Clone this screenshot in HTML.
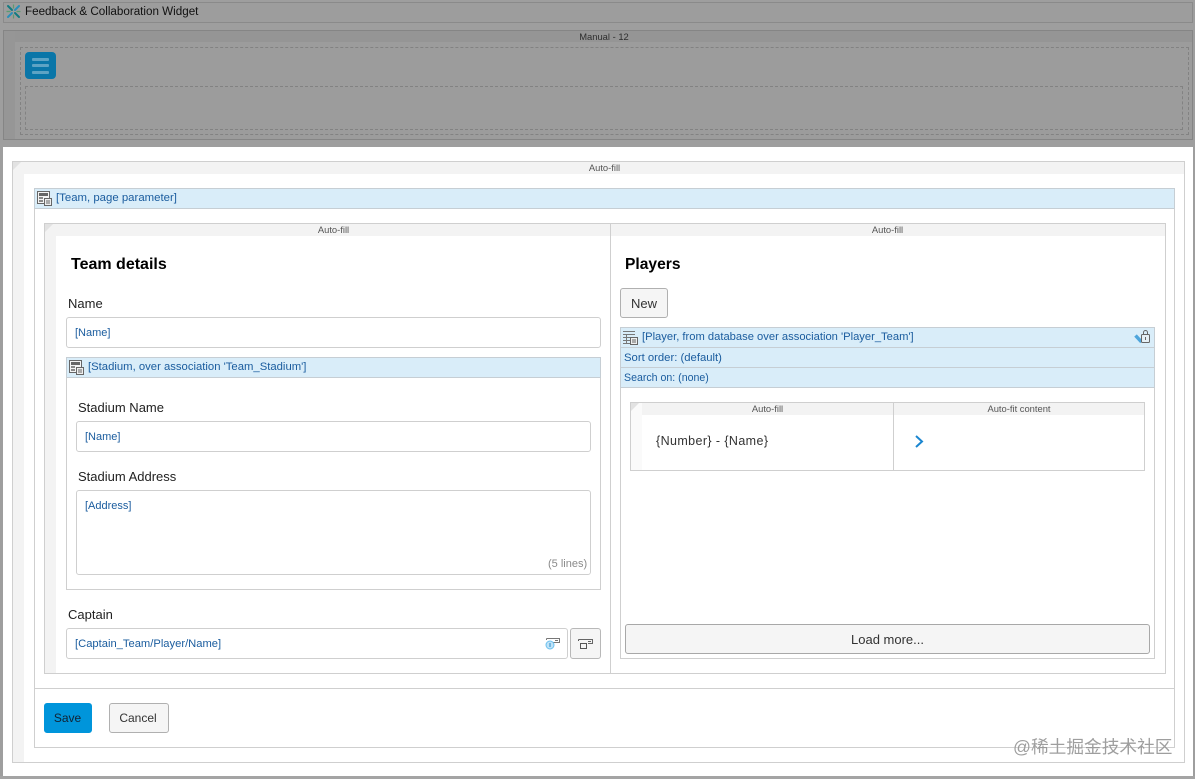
<!DOCTYPE html>
<html lang="en"><head><meta charset="utf-8"><title>Feedback &amp; Collaboration Widget</title>
<style>
html,body{margin:0;padding:0}
body{width:1195px;height:779px;position:relative;overflow:hidden;background:#9e9e9e;font-family:"Liberation Sans","Noto Sans CJK SC",sans-serif;color:#222}
div,svg,span{position:absolute;box-sizing:border-box}
.t{white-space:nowrap;line-height:16px;margin-top:1px}
.b{border:1px solid #cfcfcf;background:#fff}
.strip{background:#f3f3f3}
.cap{font-size:9.400px;color:#555;text-align:center;line-height:12px;white-space:nowrap}
.blue{background:#d9edf9;border:1px solid #c6ced4}
.lnk{color:#1a5c9e;font-size:11.300px}
.lab{font-size:13px;color:#222}
.h{font-size:16px;font-weight:bold;color:#000;margin-top:2px}
.inp{border:1px solid #cfcfcf;border-radius:3px;background:#fff}
.btn{border:1px solid #a8a8a8;border-radius:3px;background:#f5f5f5;font-size:13px;color:#333;text-align:center;line-height:29px}
</style></head><body>

<!-- top dimmed region -->
<div style="left:3px;top:2px;width:1190px;height:21px;border:1px solid #8a8a8a;background:#9d9d9d"></div>
<svg style="left:5px;top:3px" width="17" height="17" viewBox="0 0 17 17"><path d="M8.500 1.500V5.500M8.500 11.500V15.500M1.500 8.500H5.500M11.500 8.500H15.500" stroke="#5c9a70" stroke-width="1.200"/><g stroke-width="2" stroke-linecap="round"><path d="M3 3L7 7M10 10L14 14" stroke="#127a80"/><path d="M14 3L10 7M7 10L3 14" stroke="#2a8fb8"/></g></svg>
<div class="t" style="left:25px;top:3px;font-size:11.650px;color:#111">Feedback &amp; Collaboration Widget</div>

<div style="left:3px;top:30px;width:1190px;height:110px;border:1px solid #858585;background:#9c9c9c"></div>
<div style="left:4px;top:31px;width:1188px;height:11px;background:#959595"></div>
<div style="left:4px;top:31px;width:11px;height:108px;background:#969696"></div>
<div class="cap" style="left:4px;top:31px;width:1200px;color:#2e2e2e">Manual - 12</div>
<div style="left:20px;top:47px;width:1169px;height:88px;border:1px dashed #828282"></div>
<div style="left:25px;top:86px;width:1158px;height:44px;border:1px dashed #828282"></div>
<div style="left:25px;top:52px;width:31px;height:27px;background:#0a76a8;border-radius:4px"></div>
<div style="left:32px;top:58px;width:17px;height:3px;background:#5da3c4;border-radius:1px"></div>
<div style="left:32px;top:64px;width:17px;height:3px;background:#5da3c4;border-radius:1px"></div>
<div style="left:32px;top:71px;width:17px;height:3px;background:#5da3c4;border-radius:1px"></div>

<!-- white page -->
<div style="left:3px;top:147px;width:1190px;height:630px;background:#fff"></div>
<div style="left:0;top:776px;width:1195px;height:3px;background:#a4a4a4"></div>

<!-- outer Auto-fill -->
<div class="b" style="left:12px;top:161px;width:1173px;height:602px"></div>
<div class="strip" style="left:13px;top:162px;width:1171px;height:12px"></div>
<div class="strip" style="left:13px;top:162px;width:11px;height:600px"></div>
<svg style="left:13px;top:162px" width="8" height="8"><path d="M0 0H8L0 8Z" fill="#e2e2e2"/></svg>
<div class="cap" style="left:13px;top:162px;width:1183px">Auto-fill</div>

<!-- Team dataview -->
<div class="b" style="left:34px;top:188px;width:1141px;height:560px"></div>
<div class="blue" style="left:34px;top:188px;width:1141px;height:21px"></div>
<svg style="left:37px;top:191px" width="15" height="15" viewBox="0 0 15 15"><rect x=".5" y=".5" width="12" height="12" fill="#f4f4f4" stroke="#666"/><rect x="2" y="2" width="9" height="3" fill="#666"/><rect x="2" y="6" width="4" height="2" fill="#888"/><rect x="2" y="9" width="4" height="2" fill="#888"/><rect x="7.500" y="7.500" width="7" height="7" fill="#eee" stroke="#666"/><path d="M9 10H13M9 12H13" stroke="#666"/></svg>
<div class="t lnk" style="left:56px;top:189px;font-size:11.400px">[Team, page parameter]</div>
<div style="left:35px;top:688px;width:1139px;height:1px;background:#cfcfcf"></div>

<!-- Layout grid -->
<div class="b" style="left:44px;top:223px;width:1122px;height:451px"></div>
<div class="strip" style="left:45px;top:224px;width:1120px;height:12px"></div>
<div class="strip" style="left:45px;top:224px;width:11px;height:449px"></div>
<svg style="left:45px;top:224px" width="8" height="8"><path d="M0 0H8L0 8Z" fill="#e2e2e2"/></svg>
<div style="left:610px;top:224px;width:1px;height:449px;background:#cfcfcf"></div>
<div class="cap" style="left:45px;top:224px;width:577px">Auto-fill</div>
<div class="cap" style="left:611px;top:224px;width:553px">Auto-fill</div>

<!-- Left column -->
<div class="t h" style="left:71px;top:255px">Team details</div>
<div class="t lab" style="left:68px;top:295px">Name</div>
<div class="inp" style="left:66px;top:317px;width:535px;height:31px"></div>
<div class="t lnk" style="left:75px;top:324px;font-size:11px">[Name]</div>

<div class="b" style="left:66px;top:357px;width:535px;height:233px"></div>
<div class="blue" style="left:66px;top:357px;width:535px;height:21px"></div>
<svg style="left:69px;top:360px" width="15" height="15" viewBox="0 0 15 15"><rect x=".5" y=".5" width="12" height="12" fill="#f4f4f4" stroke="#666"/><rect x="2" y="2" width="9" height="3" fill="#666"/><rect x="2" y="6" width="4" height="2" fill="#888"/><rect x="2" y="9" width="4" height="2" fill="#888"/><rect x="7.500" y="7.500" width="7" height="7" fill="#eee" stroke="#666"/><path d="M9 10H13M9 12H13" stroke="#666"/></svg>
<div class="t lnk" style="left:88px;top:358px">[Stadium, over association 'Team_Stadium']</div>

<div class="t lab" style="left:78px;top:399px">Stadium Name</div>
<div class="inp" style="left:76px;top:421px;width:515px;height:31px"></div>
<div class="t lnk" style="left:85px;top:428px;font-size:11px">[Name]</div>
<div class="t lab" style="left:78px;top:468px">Stadium Address</div>
<div class="inp" style="left:76px;top:490px;width:515px;height:85px"></div>
<div class="t lnk" style="left:85px;top:497px;font-size:11px">[Address]</div>
<div class="t" style="left:548px;top:555px;font-size:11px;color:#8a8a8a">(5 lines)</div>

<div class="t lab" style="left:68px;top:606px">Captain</div>
<div class="inp" style="left:66px;top:628px;width:502px;height:31px"></div>
<div class="t lnk" style="left:75px;top:635px;font-size:11.200px">[Captain_Team/Player/Name]</div>
<svg style="left:545px;top:637px" width="15" height="14" viewBox="0 0 15 14"><path d="M1.500 1.500H14.500V5.500H8M1.500 1.500V3M10 3.500H13" fill="none" stroke="#777"/><circle cx="5" cy="8" r="4" fill="#bfe3f8" stroke="#6cc0ee"/><rect x="4.300" y="6" width="1.400" height="4" fill="#55a5d5"/></svg>
<div class="btn" style="left:570px;top:628px;width:31px;height:31px;border-color:#b8b8b8"></div>
<svg style="left:578px;top:638px" width="16" height="12" viewBox="0 0 16 12"><path d="M.5 1.500H14.500V5.500H10M10 3.500H13" fill="none" stroke="#666"/><path d="M.5 1.500V3M2.500 5.500H8.500V10.500H2.500Z" fill="none" stroke="#555"/></svg>

<!-- Right column -->
<div class="t h" style="left:625px;top:255px;font-size:15.600px">Players</div>
<div class="btn" style="left:620px;top:288px;width:48px;height:30px;border-color:#b0b0b0">New</div>

<div class="b" style="left:620px;top:327px;width:535px;height:332px"></div>
<div class="blue" style="left:620px;top:327px;width:535px;height:21px"></div>
<div class="blue" style="left:620px;top:347px;width:535px;height:21px"></div>
<div class="blue" style="left:620px;top:367px;width:535px;height:21px"></div>
<svg style="left:623px;top:330px" width="15" height="15" viewBox="0 0 15 15"><path d="M0 1.500H12M0 4.500H12M0 7.500H7M0 10.500H7M0 13.500H12M3.500 4.500V13.500" fill="none" stroke="#777"/><rect x="7.500" y="7.500" width="7" height="7" fill="#eee" stroke="#666"/><path d="M9 10H13M9 12H13" stroke="#666"/></svg>
<div class="t lnk" style="left:642px;top:328px;font-size:11.200px">[Player, from database over association 'Player_Team']</div>
<div class="t lnk" style="left:624px;top:349px;font-size:11.300px">Sort order: (default)</div>
<div class="t lnk" style="left:624px;top:369px;font-size:10.600px">Search on: (none)</div>
<svg style="left:1134px;top:329px" width="17" height="16" viewBox="0 0 17 16"><path d="M1.500 6.500L7.500 13" stroke="#4ea5dc" stroke-width="3.500"/><rect x="7.500" y="5.500" width="8" height="8" rx="1" fill="#e6f0f6" stroke="#666"/><path d="M9.500 5.500V3.500a2 2 0 0 1 4 0V5.500" fill="none" stroke="#666"/><path d="M11.500 8V11" stroke="#666"/></svg>

<div class="b" style="left:630px;top:402px;width:515px;height:69px"></div>
<div class="strip" style="left:631px;top:403px;width:513px;height:12px"></div>
<div class="strip" style="left:631px;top:403px;width:11px;height:67px;background:#fafafa"></div>
<svg style="left:631px;top:403px" width="8" height="8"><path d="M0 0H8L0 8Z" fill="#e2e2e2"/></svg>
<div style="left:893px;top:403px;width:1px;height:67px;background:#cfcfcf"></div>
<div class="cap" style="left:642px;top:403px;width:251px">Auto-fill</div>
<div class="cap" style="left:894px;top:403px;width:250px">Auto-fit content</div>
<div class="t" style="left:656px;top:432px;font-size:12.500px;color:#333;letter-spacing:.4px">{Number} - {Name}</div>
<svg style="left:913px;top:434px" width="12" height="15" viewBox="0 0 12 15"><path d="M3 2L9 7.500L3 13" fill="none" stroke="#1a86d0" stroke-width="2"/></svg>

<div class="btn" style="left:625px;top:624px;width:525px;height:30px">Load more...</div>

<!-- Footer -->
<div class="btn" style="left:44px;top:703px;width:48px;height:30px;background:#0095db;border-color:#0095db;color:#123;font-size:12px;padding-right:1px">Save</div>
<div class="btn" style="left:109px;top:703px;width:60px;height:30px;font-size:12px;border-color:#b0b0b0;padding-right:2px">Cancel</div>

<!-- Watermark -->
<div class="t" style="left:1013px;top:736px;font-size:17.700px;line-height:20px;color:rgba(125,125,125,.75);text-shadow:0 0 1px rgba(255,255,255,.8)">@稀土掘金技术社区</div>
</body></html>
